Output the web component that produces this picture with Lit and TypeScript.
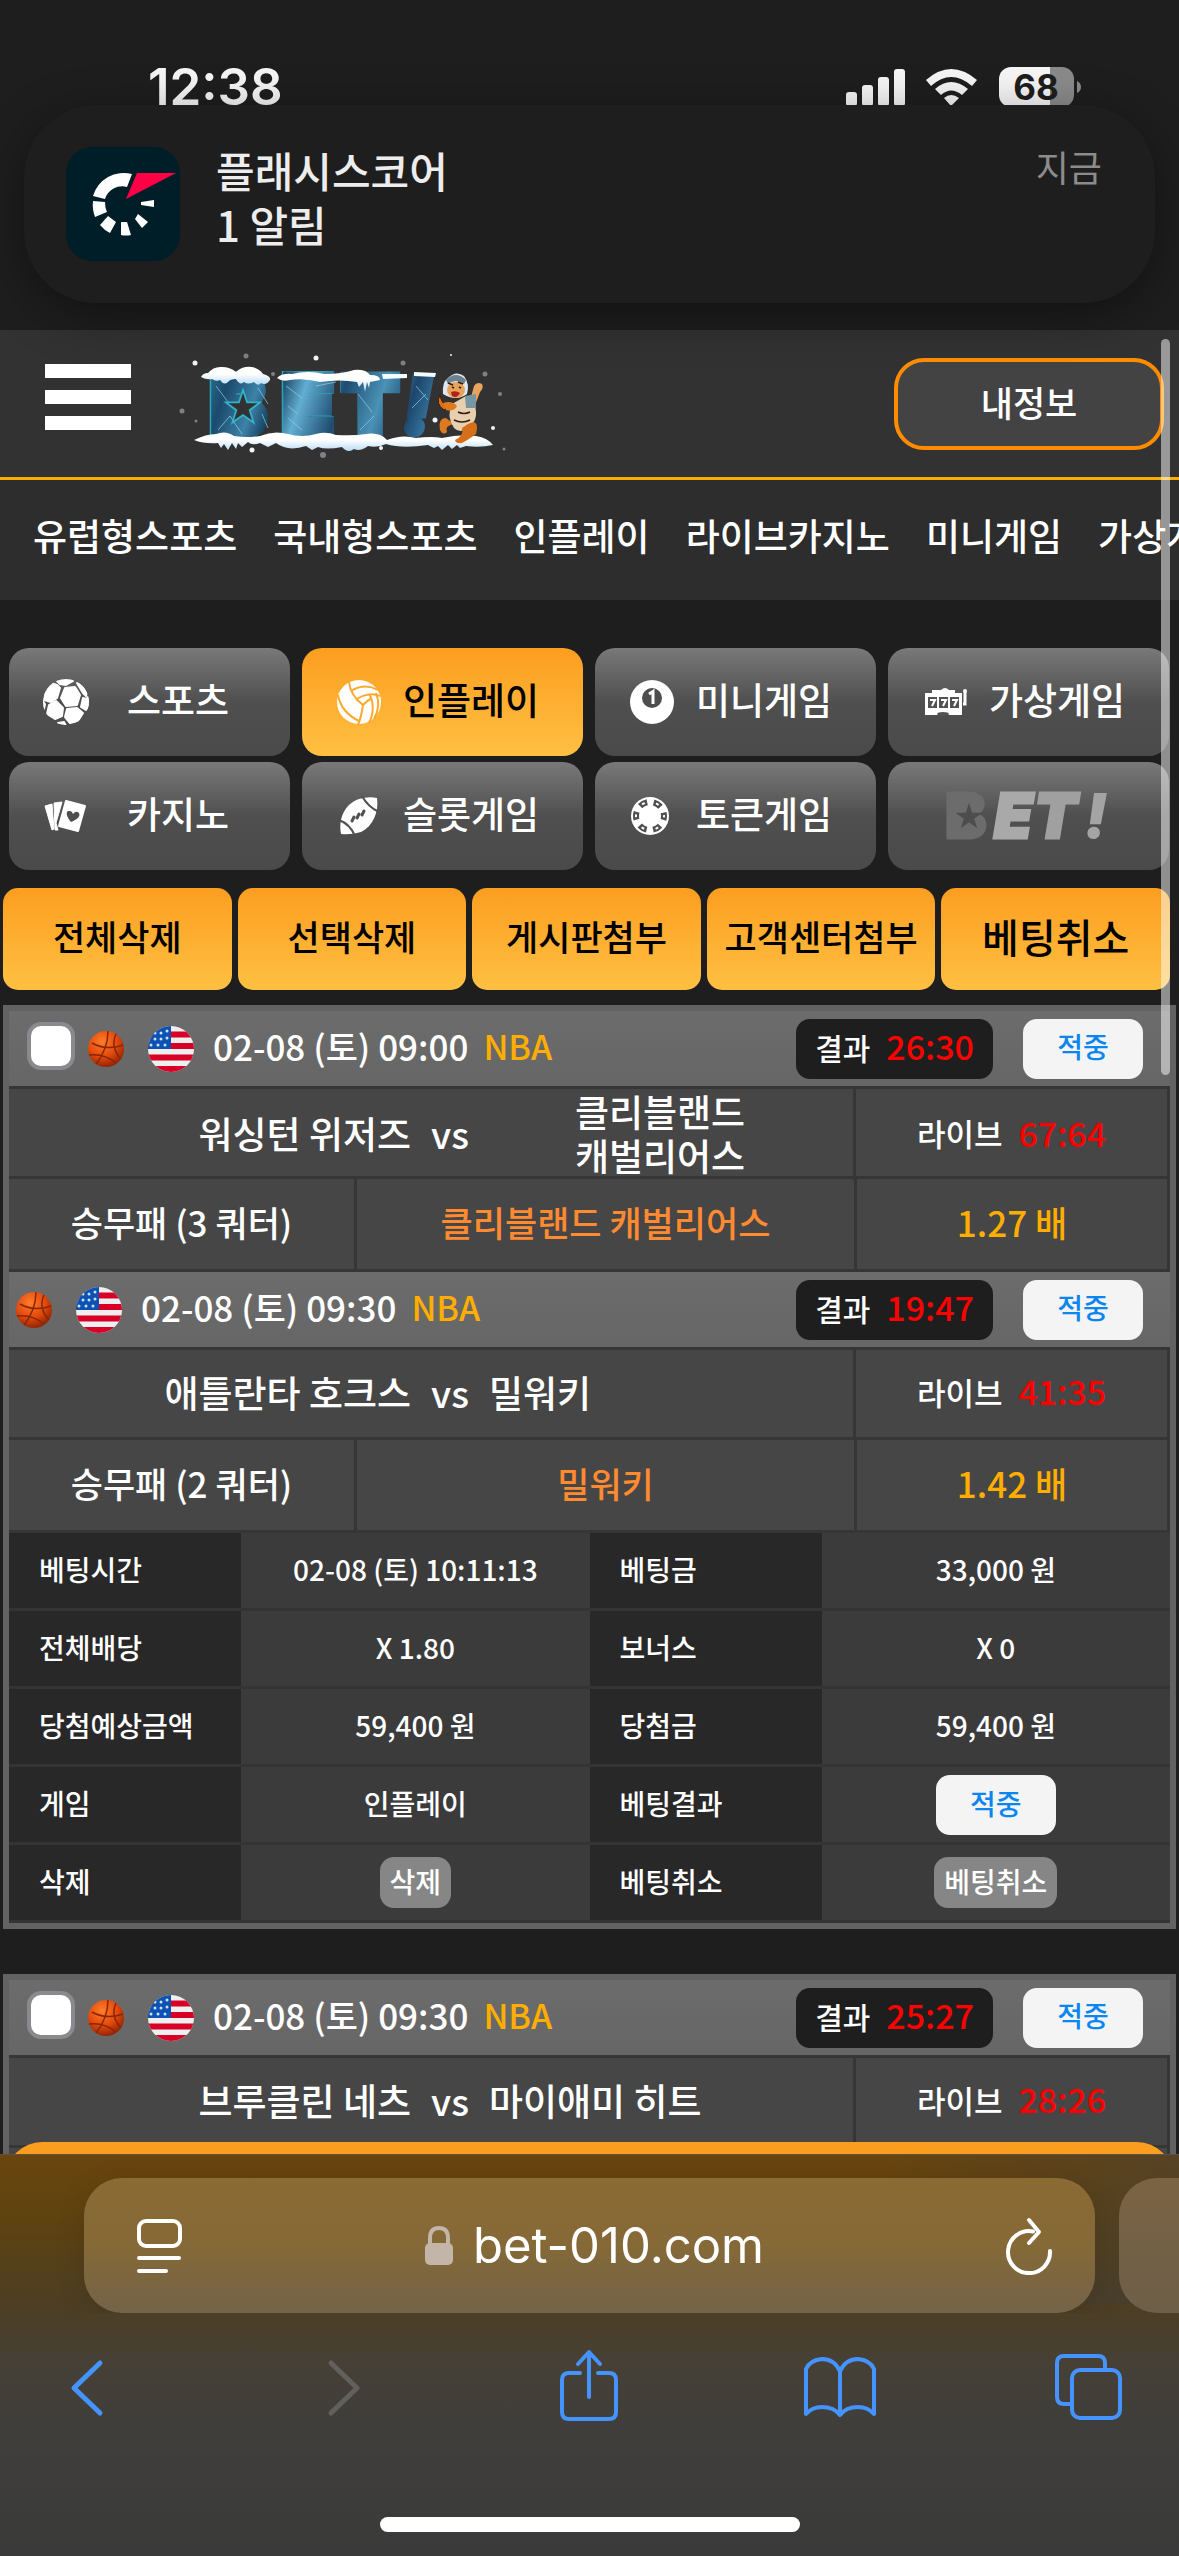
import { LitElement, html, svg, css, nothing } from "lit";
import { customElement, property } from "lit/decorators.js";
import { classMap } from "lit/directives/class-map.js";

interface Bet {
  selectable: boolean;
  date: string;
  league: string;
  result: string;
  home: string;
  away: string;
  live: string;
  market?: string;
  pick?: string;
  odds?: string;
}

interface Slip {
  bets: Bet[];
  details: boolean;
}

const slips: Slip[] = [
  {
    details: true,
    bets: [
      {
        selectable: true,
        date: "02-08 (토) 09:00",
        league: "NBA",
        result: "26:30",
        home: "워싱턴 위저즈",
        away: "클리블랜드 캐벌리어스",
        live: "67:64",
        market: "승무패 (3 쿼터)",
        pick: "클리블랜드 캐벌리어스",
        odds: "1.27 배",
      },
      {
        selectable: false,
        date: "02-08 (토) 09:30",
        league: "NBA",
        result: "19:47",
        home: "애틀란타 호크스",
        away: "밀워키",
        live: "41:35",
        market: "승무패 (2 쿼터)",
        pick: "밀워키",
        odds: "1.42 배",
      },
    ],
  },
  {
    details: false,
    bets: [
      {
        selectable: true,
        date: "02-08 (토) 09:30",
        league: "NBA",
        result: "25:27",
        home: "브루클린 네츠",
        away: "마이애미 히트",
        live: "28:26",
        market: "",
        pick: "",
        odds: "",
      },
    ],
  },
];

const STAR = "0,-10 2.3,-3.1 9.5,-3.1 3.7,1.2 5.9,8.1 0,3.9 -5.9,8.1 -3.7,1.2 -9.5,-3.1 -2.3,-3.1";

/* ---------- icons ---------- */

const soccer = svg`<svg viewBox="0 0 48 48" width="48" height="48" aria-hidden="true">
  <clipPath id="sb"><circle cx="24" cy="24" r="23"/></clipPath>
  <g clip-path="url(#sb)" fill="#fff" stroke="#fff" stroke-width="2" stroke-linejoin="round">
    <polygon points="23,10 33,9 38,17 35,27 24,28 19,20"/>
    <polygon points="3,12 9,5 15,7 18,10 15,20 9,24 2,22"/>
    <polygon points="14,2 20,0 30,0 31,3 24,7 18,6"/>
    <polygon points="35,5 40,6 45,14 44,18 41,15"/>
    <polygon points="41,20 44,21 46,19 48,26 44,32 39,29"/>
    <polygon points="7,27 14,23 21,30 20,38 13,41 5,36"/>
    <polygon points="25,31 35,30 41,35 36,43 28,45 23,39"/>
    <polygon points="0,22 3,26 2,31 0,29"/>
    <polygon points="16,45 22,44 24,48 17,48"/>
  </g></svg>`;

const volley = svg`<svg viewBox="0 0 48 48" width="48" height="48" aria-hidden="true">
  <circle cx="24" cy="24" r="22" fill="#fff"/>
  <g fill="none" stroke="#fdaa2c" stroke-width="2">
    <path d="M14 4C15 14 20 21 28 27C27 34 26 40 23 47"/>
    <path d="M3 17C5 29 14 38 24 43"/>
    <path d="M16 13C24 8 34 7 43 12"/>
    <path d="M21 22C28 16 38 15 45 18"/>
    <path d="M34 16C39 24 39 35 34 45"/>
    <path d="M41 15C45 25 43 34 39 41"/>
    <path d="M28 27C31 24 35 21 37 20"/>
  </g></svg>`;

const ball = svg`<svg viewBox="0 0 48 48" width="48" height="48" aria-hidden="true">
  <circle cx="24" cy="24" r="22" fill="#fff"/>
  <circle cx="24" cy="20" r="10" fill="#4e4e4e"/>
  <path d="M21 16L25 13.500V26" fill="none" stroke="#fff" stroke-width="3"/></svg>`;

const slot = svg`<svg viewBox="0 0 48 48" width="48" height="48" aria-hidden="true">
  <path d="M4 15H11V12H20Q24 8 28 12H34V15H41V37H4Z" fill="#fff"/>
  <path d="M42 26H44V14" fill="none" stroke="#fff" stroke-width="3"/>
  <circle cx="44" cy="13" r="2" fill="#fff"/>
  <g fill="#525252"><rect x="7" y="19" width="9" height="11"/><rect x="18" y="19" width="9" height="11"/><rect x="29" y="19" width="9" height="11"/>
  <ellipse cx="22" cy="36" rx="6" ry="2"/></g>
  <path d="M9 22H14L11 28M20 22H25L22 28M31 22H36L33 28" fill="none" stroke="#fff" stroke-width="2"/></svg>`;

const cards = svg`<svg viewBox="0 0 48 48" width="48" height="48" aria-hidden="true">
  <path d="M3 14L10 12L12 37L10 38Z" fill="#fff" stroke="#fff" stroke-linejoin="round"/>
  <path d="M12 11L20 10L14 31L16 38L13 38Z" fill="#fff" stroke="#fff" stroke-linejoin="round"/>
  <path d="M24 9L43 14L36 39L17 34Z" fill="#fff" stroke="#fff" stroke-width="2" stroke-linejoin="round"/>
  <path d="M29 30C24 24 23 18 28 19Q30 19 31 22Q34 18 37 21C39 25 34 28 29 30Z" fill="#4e4e4e"/></svg>`;

const football = svg`<svg viewBox="0 0 48 48" width="48" height="48" aria-hidden="true">
  <path d="M6 42C3 26 10 12 24 7Q34 4 42 6C44 20 38 34 26 40Q16 43 6 42Z" fill="#fff"/>
  <path d="M27 4Q33 15 44 20M4 28Q15 32 20 44" fill="none" stroke="#505050" stroke-width="2"/>
  <path d="M17 29L19 25M22 26L24 22M27 23L29 19" fill="none" stroke="#505050" stroke-width="3" stroke-linecap="round"/></svg>`;

const chip = svg`<svg viewBox="0 0 48 48" width="48" height="48" aria-hidden="true">
  <circle cx="22" cy="24" r="19" fill="#fff"/>
  <circle cx="22" cy="24" r="14" fill="none" stroke="#505050" stroke-width="6" stroke-dasharray="8 6.660" stroke-dashoffset="4"/>
  <circle cx="22" cy="24" r="14" fill="none" stroke="#fff" stroke-width="2" stroke-dasharray="3 11.660" stroke-dashoffset="1.500"/></svg>`;

const watermark = svg`<svg viewBox="0 0 170 50" width="170" height="50" role="img" aria-label="BET!">
  <rect x="14" y="9" width="22" height="32" fill="#6c6c6c"/>
  <g font-family="Inter, 'Liberation Sans', sans-serif" font-weight="900" font-size="62" stroke-width="3">
    <text x="1" y="47" fill="#6c6c6c" stroke="#6c6c6c">B</text>
    <text x="50" y="47" font-style="italic" fill="#a9a9a9" stroke="#a9a9a9">E</text>
    <text x="90" y="47" font-style="italic" fill="#a0a0a0" stroke="#a0a0a0">T</text>
    <text x="140" y="47" font-style="italic" fill="#a4a4a4">!</text>
  </g>
  <polygon points=${STAR} fill="#4d4d4d" transform="translate(25 26) scale(1.4)"/></svg>`;

const brand = svg`<svg viewBox="0 0 350 115" width="350" height="115" role="img" aria-label="BET!">
  <defs>
    <linearGradient id="ice" gradientUnits="userSpaceOnUse" x1="34" y1="30" x2="270" y2="110">
      <stop offset="0" stop-color="#2f7196"/><stop offset=".1" stop-color="#1b4a6c"/>
      <stop offset=".22" stop-color="#3d82a8"/><stop offset=".3" stop-color="#18405f"/>
      <stop offset=".4" stop-color="#62aed2"/><stop offset=".55" stop-color="#1e4c70"/>
      <stop offset=".7" stop-color="#4a92b6"/><stop offset=".82" stop-color="#1d466a"/>
      <stop offset=".9" stop-color="#34709a"/><stop offset="1" stop-color="#16344f"/>
    </linearGradient>
    <linearGradient id="snow" x1="0" y1="0" x2="0" y2="1">
      <stop offset=".4" stop-color="#fff"/><stop offset="1" stop-color="#b9dcf5"/>
    </linearGradient>
  </defs>
  <rect x="54" y="38" width="34" height="46" fill="url(#ice)"/>
  <g font-family="Inter, 'Liberation Sans', sans-serif" font-weight="900" font-size="80">
    <g fill="none" stroke="#28a6bd" stroke-width="10">
      <text x="41" y="88">B</text><text x="113" y="88">E</text><text x="172" y="88" stroke-width="8">T</text>
    </g>
    <g fill="url(#ice)" stroke="url(#ice)" stroke-width="9">
      <text x="42" y="88">B</text><text x="114" y="88">E</text><text x="173" y="88">T</text>
      <text x="232" y="88" font-style="italic" stroke-width="5">!</text>
    </g>
  </g>
  <g fill="none" stroke="#8fd0ea" stroke-width="1" opacity=".7">
    <path d="M46 40L58 56M48 84L60 70L72 88M88 42L98 58M92 68L98 82M116 40L132 52M118 60L128 68M118 72L132 84M146 40L166 36M188 48L202 66M190 84L204 70M246 40L258 54M242 62L256 48"/>
  </g>
  <polygon points=${STAR} fill="#323232" stroke="#2fb4c8" transform="translate(73 62) scale(1.8)"/>
  <path d="M31 31Q33 27 38 27Q44 20 52 21Q60 21 66 26Q72 20 82 21Q90 23 93 28Q101 30 100 34Q96 40 91 37Q88 41 84 36Q78 39 74 36Q70 40 66 33Q60 33 58 36Q54 40 50 34Q46 36 42 33Q36 34 31 31Z" fill="url(#snow)"/>
  <path d="M107 32Q112 27 122 28Q138 24 154 28Q172 28 184 24Q196 23 200 29Q210 29 210 34L200 36L199 42L197 36L195 46L193 36L189 41L187 36Q170 33 150 36Q134 32 120 34Q112 36 107 32Z" fill="url(#snow)"/>
  <path d="M212 28L237 28V32L213 33ZM244 26L266 27L265 31L244 30Z" fill="#f4fbff"/>
  <path d="M24 94Q36 88 46 88Q56 84 64 90Q76 92 90 90Q104 84 118 88Q132 92 146 88Q156 85 166 89Q184 90 196 88Q210 86 217 94Q232 88 246 92Q262 90 272 92Q290 88 306 90Q318 92 323 99Q310 102 296 100L290 102L287 99L282 103L278 99L272 104L268 100L264 102L258 99Q232 103 216 98Q208 102 198 100Q190 106 184 103Q178 108 172 101Q156 104 148 101L142 104L136 100Q118 106 106 97L98 101L90 97Q82 100 78 96L72 101L68 97L66 103L62 97L58 104L54 98L51 102L48 97Q34 98 24 94Z" fill="url(#snow)"/>
  <g>
    <path d="M274 64Q265 58 270 49Q272 60 279 60Z" fill="#d9711b" stroke="#3d1d0b"/>
    <path d="M298 62L304 40Q307 35 312 38Q314 42 310 46L304 62Z" fill="#e9a35d"/>
    <path d="M276 72Q268 72 270 84Q273 90 277 86Q274 80 284 78Z" fill="#dd7a22"/>
    <path d="M282 58Q276 70 284 82Q290 88 298 82Q309 74 305 60L296 50Z" fill="#e8cfae"/>
    <path d="M298 78Q310 72 306 88Q298 94 292 97Q286 98 285 94Q294 90 292 82Z" fill="#d66f19"/>
    <path d="M273 57Q282 54 287 60Q284 66 276 64Z" fill="#e17a1f"/>
    <path d="M295 50L306 48L306 62L296 62Z" fill="#7695a5"/>
    <path d="M273 48Q272 36 278 32Q286 24 294 30Q300 38 297 48Q286 56 273 48Z" fill="#dfe8ee"/>
    <path d="M276 34Q286 24 296 34L294 38Q286 32 278 38Z" fill="#6c8290"/>
    <ellipse cx="286" cy="44" rx="9" ry="8" fill="#e9a25a"/>
    <path d="M281 46Q286 44 290 47Q287 53 282 50Z" fill="#b3201d"/>
    <path d="M282 41L284 42M289 41L291 42M284 74Q292 78 300 74M288 66Q294 69 300 66M278 37L283 39M288 36L293 38" stroke="#301a12" fill="none" stroke-width="1.500"/>
  </g>
  <g fill="#eef4f7"><circle cx="25" cy="17" r="2.500"/><circle cx="146" cy="12" r="2.500"/><circle cx="265" cy="74" r="2.500"/><circle cx="82" cy="104" r="2.500"/><circle cx="323" cy="82" r="2"/><circle cx="211" cy="102" r="2"/><circle cx="281" cy="9" r="1"/></g>
  <g fill="#808080"><circle cx="76" cy="10" r="2.500"/><circle cx="12" cy="65" r="2.500"/><circle cx="233" cy="17" r="2.500"/><circle cx="315" cy="28" r="2.500"/><circle cx="330" cy="48" r="2"/><circle cx="153" cy="109" r="3"/><circle cx="26" cy="75" r="1.500"/><circle cx="103" cy="28" r="2"/><circle cx="334" cy="103" r="1.500"/></g></svg>`;

const scoreApp = svg`<svg viewBox="0 0 114 114" width="114" height="114" aria-hidden="true">
  <rect width="114" height="114" rx="26" fill="#001e28"/>
  <g fill="#fff">
    <path d="M27 49A32 32 0 0 1 66 27L61 40A18 18 0 0 0 39 52Z"/>
    <path d="M27 54L39 55Q39 61 41 65L29 70Q26 62 27 54Z"/>
    <path d="M42 69L50 75L44 86Q38 83 34 78Z"/>
    <path d="M55 75H61L65 88Q60 89 55 88Z"/>
    <path d="M72 67L82 75L76 81L69 72Z"/>
    <path d="M75 55L88 53V60L75 58Z"/>
  </g>
  <path d="M71 26H110L60 52Z" fill="#ff0046"/></svg>`;

const basketball = svg`<svg viewBox="0 0 40 40" width="40" height="40" aria-hidden="true">
  <defs><radialGradient id="bb" cx=".4" cy=".3" r=".75"><stop offset="0" stop-color="#ff7d2a"/><stop offset=".55" stop-color="#e24a0c"/><stop offset="1" stop-color="#8a1e03"/></radialGradient></defs>
  <circle cx="20" cy="20" r="18" fill="url(#bb)"/>
  <g fill="none" stroke="#8a2604" stroke-width="1.500"><path d="M6 14Q20 22 37 16M22 2Q22 20 10 35M3 26Q18 24 30 34M30 5Q24 18 35 30"/></g></svg>`;

const flag = svg`<svg viewBox="0 0 46 46" width="46" height="46" role="img" aria-label="US">
  <clipPath id="fl"><circle cx="23" cy="23" r="23"/></clipPath>
  <g clip-path="url(#fl)">
    <rect width="46" height="46" fill="#efefef"/>
    <path d="M0 8.500H46M0 20H46M0 31.500H46M0 43H46" stroke="#d80027" stroke-width="6"/>
    <rect width="23" height="23" fill="#0b52b4"/>
    <g fill="#cfe0f5"><circle cx="7" cy="7" r="1.500"/><circle cx="13" cy="7" r="1.500"/><circle cx="19" cy="5" r="1.500"/><circle cx="7" cy="13" r="1.500"/><circle cx="13" cy="13" r="1.500"/><circle cx="19" cy="12" r="1.500"/><circle cx="3" cy="19" r="1.500"/><circle cx="10" cy="19" r="1.500"/><circle cx="17" cy="19" r="1.500"/></g>
  </g></svg>`;

/* ---------- one bet ---------- */

@customElement("bet-entry")
class BetEntry extends LitElement {
  @property({ attribute: false }) bet!: Bet;

  static styles = css`
    :host { display: block; color: #fff; font-size: 35px; }
    svg { display: block; flex: none; }
    .head {
      display: flex; align-items: center; box-sizing: border-box; height: 78px;
      padding: 0 27px 0 5px; border-bottom: 3px solid #363636;
      background: linear-gradient(#6c6c6c, #666);
    }
    .tick {
      appearance: none; box-sizing: border-box; width: 48px; height: 48px;
      margin: 0 11px 6px 13px; border: 4px solid #89898e; border-radius: 14px;
      background: #fff;
    }
    .country { margin: 0 19px 0 22px; }
    .date, .league { padding-bottom: 5px; white-space: nowrap; }
    .league { margin-left: 15px; font-size: 34px; color: #ffae00; }
    .result {
      display: flex; align-items: center; gap: 16px; box-sizing: border-box;
      height: 60px; margin-left: auto; padding: 0 19px 4px; border-radius: 14px;
      background: #1e1e1e; font-size: 30px;
    }
    .score { color: #f00; font-size: 34px; }
    .won {
      display: flex; align-items: center; justify-content: center; box-sizing: border-box;
      width: 120px; height: 60px; margin-left: 30px; padding-bottom: 4px; border-radius: 14px;
      background: #f4f4f4; color: #0a86f0; font-size: 28px;
    }
    .row {
      display: grid; border-right: 3px solid #363636; border-bottom: 3px solid #363636;
      background: #464646;
    }
    .match { grid-template-columns: minmax(0, 1fr) 314px; height: 87px; }
    .market { grid-template-columns: 345px minmax(0, 1fr) 313px; height: 90px; }
    .cell { display: flex; align-items: center; justify-content: center; padding-bottom: 4px; }
    .cell + .cell { border-left: 3px solid #363636; }
    .teams {
      display: grid; grid-template-columns: 1fr auto 1fr; align-items: center;
      gap: 20px; padding: 0 22px 4px 60px; font-size: 37px; line-height: 44px;
    }
    .home { text-align: right; }
    .away { width: fit-content; text-align: center; word-break: keep-all; }
    .live { gap: 16px; font-size: 31px; }
    .pick { color: #ff8a30; }
    .odds { color: #ffae00; }
  `;

  render() {
    const b = this.bet;
    return html`
      <div class="head">
        ${b.selectable ? html`<input class="tick" type="checkbox" aria-label="선택" />` : nothing}
        ${basketball}
        <span class="country">${flag}</span>
        <span class="date">${b.date}</span>
        <span class="league">${b.league}</span>
        <span class="result">결과 <span class="score">${b.result}</span></span>
        <span class="won">적중</span>
      </div>
      <div class="row match">
        <div class="cell teams">
          <span class="home">${b.home}</span><span>vs</span><span class="away">${b.away}</span>
        </div>
        <div class="cell live">라이브 <span class="score">${b.live}</span></div>
      </div>
      <div class="row market">
        <div class="cell">${b.market}</div>
        <div class="cell pick">${b.pick}</div>
        <div class="cell odds">${b.odds}</div>
      </div>
    `;
  }
}

/* ---------- page ---------- */

@customElement("app-root")
class AppRoot extends LitElement {
  static styles = css`
    :host {
      display: flex; flex-direction: column; height: 100vh; overflow: hidden;
      background: #1e1e1e; color: #fff;
      font-family: "Noto Sans CJK KR", "Noto Sans", sans-serif;
      font-weight: 500; line-height: 1.2;
    }
    svg { display: block; flex: none; }
    button { border: 0; padding: 0; background: none; color: inherit; font: inherit; }
    a { color: inherit; text-decoration: none; }

    .status {
      display: flex; justify-content: space-between; box-sizing: border-box;
      height: 105px; padding: 66px 96px 0 148px; overflow: hidden;
    }
    .clock { font: 600 51px/42px Inter, "Liberation Sans", sans-serif; color: #f5f5f5; }

    .notice {
      position: relative; z-index: 1; display: flex; align-items: center; box-sizing: border-box;
      height: 198px; margin: 0 24px 27px; padding: 0 53px 0 42px; border-radius: 72px;
      background: #1e1e1e; box-shadow: 0 12px 48px rgba(0, 0, 0, .4);
    }
    .note { flex: 1; margin-left: 36px; padding-bottom: 14px; font-size: 42px; line-height: 54px; color: #ededed; }
    .when {
      align-self: flex-start; padding-top: 40px; color: #8c8c8c;
      font-size: 36px; line-height: 42px; font-weight: 400;
    }

    .page { position: relative; flex: 1; min-height: 0; overflow: hidden; }
    .top {
      display: flex; align-items: center; box-sizing: border-box; height: 150px;
      padding: 0 15px 0 45px; border-bottom: 3px solid #ffae00; background: #323232;
    }
    .menu { display: grid; gap: 12px; width: 86px; padding-bottom: 14px; }
    .bar { height: 14px; background: #fff; }
    .brand { margin: 0 auto 0 39px; }
    .mine {
      width: 270px; height: 92px; padding-bottom: 4px; border: 4px solid #ff8c00;
      border-radius: 30px; background: #434343; font-size: 35px;
    }
    .nav {
      display: flex; align-items: center; gap: 36px; box-sizing: border-box;
      height: 120px; padding: 0 0 9px 33px; background: #2d2d2d;
      font-size: 37px; white-space: nowrap; overflow: hidden;
    }

    .tiles {
      display: grid; grid-template-columns: repeat(4, minmax(0, 1fr)); gap: 6px 12px;
      padding: 48px 10px 18px 9px;
    }
    .tile {
      display: flex; align-items: center; box-sizing: border-box; height: 108px;
      padding: 0 24px 0 33px; border-radius: 20px; font-size: 37px;
      background: linear-gradient(#797979, #4f4f4f 50%, #4a4a4a);
    }
    .tile.on { background: linear-gradient(#fc9e20, #ffc042); color: #000; }
    .tile.mark { justify-content: center; padding: 0; }
    .name { flex: 1; text-align: center; padding-bottom: 6px; }

    .actions {
      display: grid; grid-template-columns: repeat(5, minmax(0, 1fr)); gap: 6px;
      padding: 0 9px 0 3px;
    }
    .action {
      height: 102px; padding-bottom: 6px; border-radius: 15px; color: #000; font-size: 35px;
      white-space: nowrap; background: linear-gradient(#fc9e20, #ffc042);
    }
    .action.big { font-size: 40px; }

    .slip { margin: 15px 3px 45px; border: 6px solid #626262; }
    .details {
      width: 100%; border-spacing: 0; table-layout: fixed; font-size: 28px;
      line-height: 36px;
    }
    .details th, .details td {
      box-sizing: border-box; height: 78px; padding: 0 0 4px; border-bottom: 3px solid #343434;
      font-weight: 500; background: #3b3b3b; text-align: center;
    }
    .details th { width: 20%; padding-left: 30px; background: #282828; text-align: left; }
    .details .full { padding: 0; }
    .won {
      display: inline-block; box-sizing: border-box; width: 120px; height: 60px;
      padding-bottom: 4px; border-radius: 14px; background: #f4f4f4;
      color: #0a86f0; line-height: 56px; vertical-align: middle;
    }
    .chip {
      height: 51px; padding: 0 10px 4px; border-radius: 14px; background: #868686;
      line-height: 36px; vertical-align: middle;
    }

    .thumb {
      position: absolute; z-index: 2; top: 9px; right: 9px; width: 9px; height: 736px;
      border-radius: 5px; background: rgba(255, 255, 255, .5);
    }
    .cart {
      position: absolute; left: 6px; right: 6px; bottom: -88px; height: 100px;
      border-radius: 36px; background: #fb9d1f;
    }

    .browser {
      position: relative; height: 402px; border-top: 1px solid #5d5345; box-sizing: border-box;
      background:
        linear-gradient(90deg, transparent 75%, rgba(62, 62, 62, .45)) 0 0 / 100% 150px no-repeat,
        linear-gradient(#6a450e, #60430f 14%, #4e3e22 36%, #464036 52%, #3f3e3b 68%, #3a3a3a);
    }
    .fields {
      display: flex; gap: 24px; padding: 23px 0 0 84px; overflow: hidden;
    }
    .field {
      display: flex; align-items: center; justify-content: space-between; box-sizing: border-box;
      flex: 1; height: 135px; padding: 0 42px 0 50px; border-radius: 38px;
      background: linear-gradient(#8b6a33, #856937 50%, #736348);
      box-shadow: 0 6px 30px rgba(0, 0, 0, .12);
    }
    .next { flex: none; width: 60px; height: 135px; border-radius: 38px 0 0 38px;
      background: linear-gradient(#7b6342, #6d5f49); }
    .address {
      display: flex; align-items: center; gap: 20px;
      font: 400 49px/60px Inter, "Liberation Sans", sans-serif;
    }
    .tools { display: flex; justify-content: space-between; padding: 24px 41px 0 36px; color: #4593ff; }
    .home {
      position: absolute; left: 50%; bottom: 24px; width: 420px; height: 15px;
      margin-left: -210px; border-radius: 8px; background: #fff;
    }
  `;

  private tile(icon: unknown, name: string, on = false) {
    return html`<a class=${classMap({ tile: true, on })} href="#">${icon}<span class="name">${name}</span></a>`;
  }

  private details() {
    return html`<table class="details">
      <tr><th>베팅시간</th><td>02-08 (토) 10:11:13</td><th>베팅금</th><td>33,000 원</td></tr>
      <tr><th>전체배당</th><td>X 1.80</td><th>보너스</th><td>X 0</td></tr>
      <tr><th>당첨예상금액</th><td>59,400 원</td><th>당첨금</th><td>59,400 원</td></tr>
      <tr><th>게임</th><td>인플레이</td><th>베팅결과</th><td class="full"><span class="won">적중</span></td></tr>
      <tr><th>삭제</th><td class="full"><button class="chip">삭제</button></td><th>베팅취소</th><td class="full"><button class="chip">베팅취소</button></td></tr>
    </table>`;
  }

  render() {
    return html`
      <header class="status">
        <span class="clock">12:38</span>
        <svg viewBox="0 0 237 42" width="237" height="42" role="img" aria-label="68%">
          <g fill="#f5f5f5">
            <rect x="0" y="26" width="11" height="14" rx="3"/><rect x="16" y="19" width="11" height="21" rx="3"/>
            <rect x="32" y="11" width="11" height="29" rx="3"/><rect x="48" y="3" width="11" height="37" rx="3"/>
            <path d="M80 14Q105 -8 131 14L126 20Q105 2 85 20Z"/>
            <path d="M89 23Q105 9 122 23L116 29Q105 20 95 29Z"/>
            <path d="M98 32Q105 26 113 32L105 40Z"/>
          </g>
          <clipPath id="bt"><rect x="153" y="1" width="75" height="40" rx="12"/></clipPath>
          <g clip-path="url(#bt)"><rect x="153" y="0" width="52" height="42" fill="#f5f5f5"/><rect x="204" y="0" width="24" height="42" fill="#8a8a8a"/></g>
          <path d="M231 15Q235 17 235 21Q235 25 231 27Z" fill="#8a8a8a"/>
          <text x="190" y="34" text-anchor="middle" font-family="Inter, sans-serif" font-weight="700" font-size="35" fill="#1e1e1e">68</text>
        </svg>
      </header>

      <section class="notice">
        ${scoreApp}
        <div class="note"><div>플래시스코어</div><div>1 알림</div></div>
        <span class="when">지금</span>
      </section>

      <main class="page">
        <div class="top">
          <button class="menu" aria-label="메뉴">
            <span class="bar"></span><span class="bar"></span><span class="bar"></span>
          </button>
          <a class="brand" href="#">${brand}</a>
          <button class="mine">내정보</button>
        </div>
        <nav class="nav">
          ${["유럽형스포츠", "국내형스포츠", "인플레이", "라이브카지노", "미니게임", "가상게임"].map(
            (label) => html`<a href="#">${label}</a>`
          )}
        </nav>
        <div class="tiles">
          ${this.tile(soccer, "스포츠")} ${this.tile(volley, "인플레이", true)}
          ${this.tile(ball, "미니게임")} ${this.tile(slot, "가상게임")}
          ${this.tile(cards, "카지노")} ${this.tile(football, "슬롯게임")}
          ${this.tile(chip, "토큰게임")}
          <a class="tile mark" href="#">${watermark}</a>
        </div>
        <div class="actions">
          <button class="action">전체삭제</button>
          <button class="action">선택삭제</button>
          <button class="action">게시판첨부</button>
          <button class="action">고객센터첨부</button>
          <button class="action big">베팅취소</button>
        </div>
        ${slips.map(
          (slip) => html`<section class="slip">
            ${slip.bets.map((bet) => html`<bet-entry .bet=${bet}></bet-entry>`)}
            ${slip.details ? this.details() : nothing}
          </section>`
        )}
        <div class="thumb"></div>
        <div class="cart"></div>
      </main>

      <footer class="browser">
        <div class="fields">
          <div class="field">
            <button aria-label="페이지 메뉴">
              <svg viewBox="0 0 50 58" width="50" height="58" fill="none" stroke="#fff" stroke-width="4" stroke-linecap="round">
                <rect x="5" y="4" width="41" height="25" rx="7"/><path d="M5 41H45M5 54H32"/>
              </svg>
            </button>
            <button class="address">
              <svg viewBox="0 0 28 40" width="28" height="40">
                <path d="M5 18V12Q5 2 14 2Q23 2 23 12V18" fill="none" stroke="#c3b5a8" stroke-width="4"/>
                <rect x="0" y="17" width="28" height="22" rx="5" fill="#c3b5a8"/>
              </svg>
              <span>bet-010.com</span>
            </button>
            <button aria-label="새로고침">
              <svg viewBox="0 0 48 58" width="48" height="58" fill="none" stroke="#fff" stroke-width="4" stroke-linecap="round" stroke-linejoin="round">
                <path d="M28 14.500A21 21 0 1 0 45 34"/><path d="M24 3L34 15L24 26"/>
              </svg>
            </button>
          </div>
          <div class="next"></div>
        </div>
        <div class="tools">
          <button aria-label="뒤로"><svg viewBox="0 0 100 100" width="100" height="100" fill="none" stroke="currentColor" stroke-width="5" stroke-linecap="round" stroke-linejoin="round"><path d="M64 26L38 51L64 76"/></svg></button>
          <button aria-label="앞으로"><svg viewBox="0 0 100 100" width="100" height="100" fill="none" stroke="#62605c" stroke-width="5" stroke-linecap="round" stroke-linejoin="round"><path d="M44 26L70 51L44 76"/></svg></button>
          <button aria-label="공유"><svg viewBox="0 0 100 100" width="100" height="100" fill="none" stroke="currentColor" stroke-width="4" stroke-linecap="round" stroke-linejoin="round"><path d="M43 36H32Q25 36 25 43V75Q25 82 32 82H72Q79 82 79 75V43Q79 36 72 36H61" /><path d="M52 60V16M41 27L52 15L63 27"/></svg></button>
          <button aria-label="책갈피"><svg viewBox="0 0 100 100" width="100" height="100" fill="none" stroke="currentColor" stroke-width="4" stroke-linejoin="round"><path d="M52 34Q46 22 34 22Q22 23 18 32V77Q24 70 34 70Q46 70 52 78Q58 70 70 70Q80 70 86 77V32Q82 23 70 22Q58 22 52 34V78"/></svg></button>
          <button aria-label="탭"><svg viewBox="0 0 100 100" width="100" height="100" fill="none" stroke="currentColor" stroke-width="4" stroke-linejoin="round"><path d="M32 67H26Q19 67 19 60V26Q19 19 26 19H60Q67 19 67 26V32"/><rect x="34" y="33" width="48" height="48" rx="8"/></svg></button>
        </div>
        <div class="home"></div>
      </footer>
    `;
  }
}
